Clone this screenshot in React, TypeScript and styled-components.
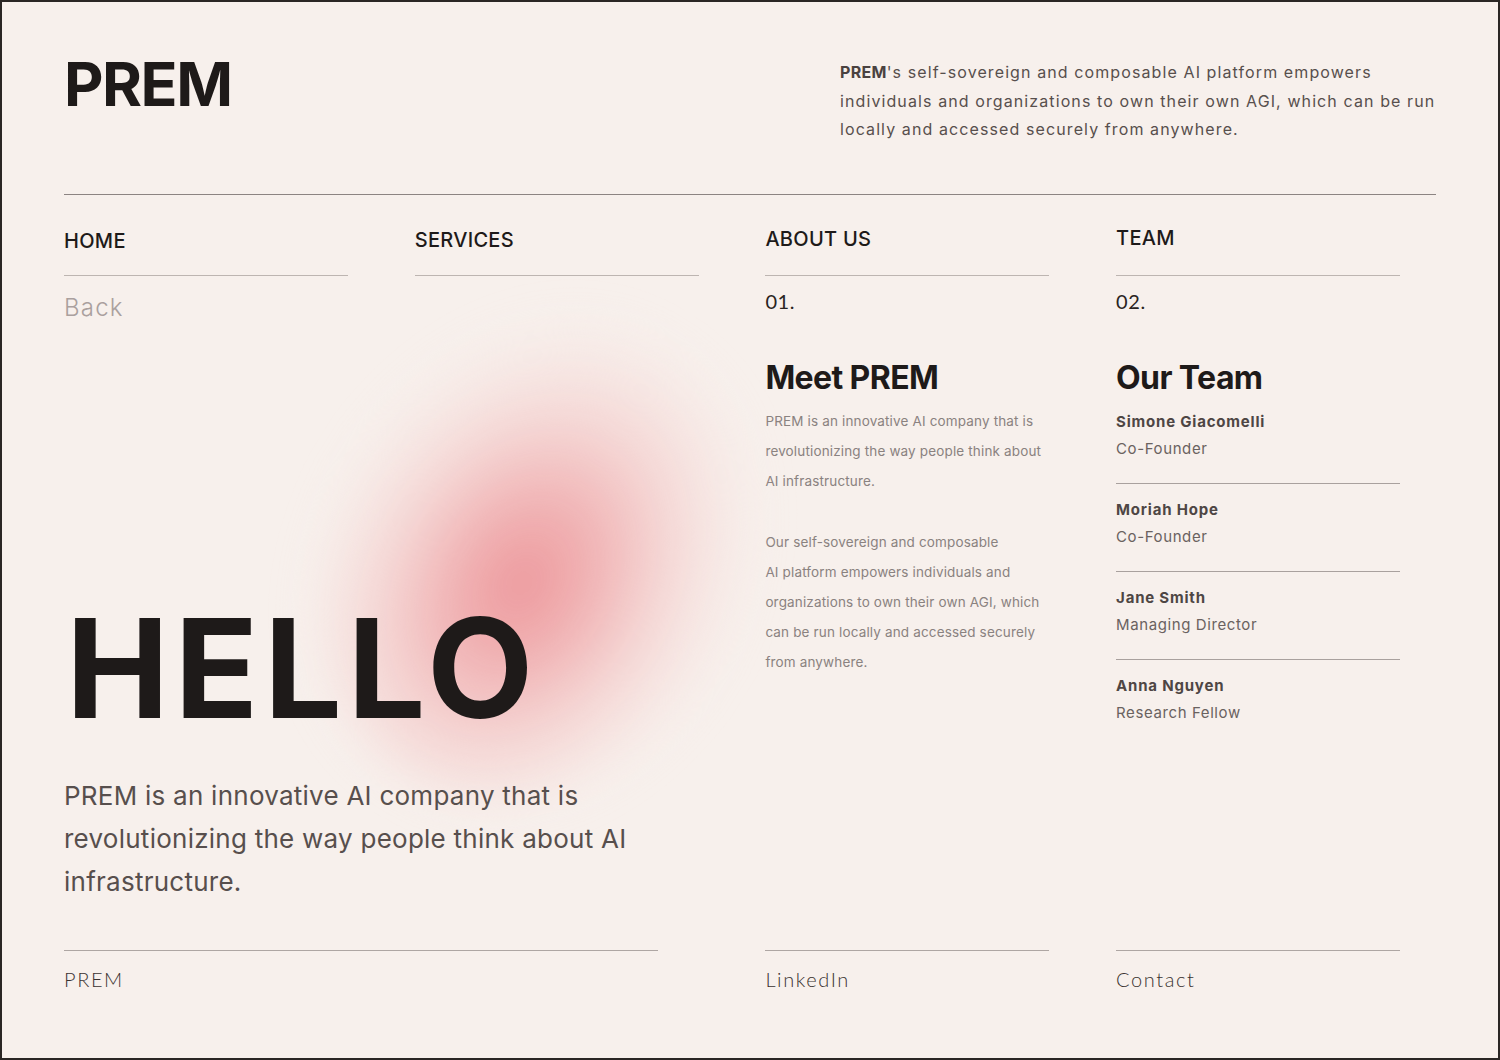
import styled, { createGlobalStyle } from 'styled-components';

const GlobalStyle = createGlobalStyle`
  html, body {
    margin: 0;
    padding: 0;
    background: #f7f0ec;
  }
  * {
    box-sizing: border-box;
  }
`;

const C = {
  bg: '#f7f0ec',
  ink: '#1e1a19',
  text: '#574f4d',
  soft: '#8a8280',
  faint: '#aaa09e',
  rule: '#8c8482',
  ruleLight: '#bdb5b1',
};

const SANS = `'Inter', 'Noto Sans', sans-serif`;
const LIGHT = `'Lato', 'Noto Sans', sans-serif`;

const Frame = styled.div`
  width: 1500px;
  height: 1060px;
  border: 2px solid #2a2624;
  background: ${C.bg};
  padding: 0 62px;
  display: flex;
  flex-direction: column;
  overflow: hidden;
  font-family: ${SANS};
`;

const Header = styled.header`
  height: 193px;
  display: flex;
  justify-content: space-between;
  align-items: flex-start;
  padding-top: 52px;
  border-bottom: 1px solid ${C.rule};
`;

const Logo = styled.div`
  font-size: 61px;
  font-weight: 700;
  line-height: 1;
  letter-spacing: -1.5px;
  color: ${C.ink};
`;

const Intro = styled.p`
  margin: 4px 0 0;
  width: 596px;
  font-size: 16px;
  line-height: 28.5px;
  letter-spacing: 1.1px;
  color: ${C.text};

  strong {
    font-weight: 700;
    color: #4a4240;
    letter-spacing: 0.3px;
  }
`;

const Grid = styled.div`
  display: grid;
  grid-template-columns: repeat(4, 284px);
  column-gap: 66.7px;
  align-content: start;
`;

const Body = styled(Grid)`
  flex: 1;
`;

const NavCell = styled.div<{ $lift?: number }>`
  padding-top: ${({ $lift }) => 33 - ($lift ?? 0)}px;
  padding-bottom: ${({ $lift }) => 23 + ($lift ?? 0)}px;
  border-bottom: 1.5px solid ${C.ruleLight};
  font-size: 20px;
  font-weight: 500;
  line-height: 24px;
  letter-spacing: 0.3px;
  color: ${C.ink};
`;

const Hero = styled.section`
  grid-column: 1 / span 2;
  position: relative;
  display: flex;
  flex-direction: column;
`;

const Back = styled.div`
  margin-top: 17px;
  font-size: 24px;
  font-weight: 300;
  line-height: 30px;
  letter-spacing: 1.2px;
  color: ${C.faint};
`;

const Blob = styled.div`
  position: absolute;
  left: 266px;
  top: 36px;
  width: 410px;
  height: 500px;
  border-radius: 50%;
  transform: rotate(32deg);
  background: radial-gradient(
    ellipse at 50% 55%,
    rgba(236, 146, 150, 0.95) 0%,
    rgba(239, 164, 167, 0.8) 22%,
    rgba(243, 194, 194, 0.55) 44%,
    rgba(246, 220, 218, 0.32) 62%,
    rgba(247, 240, 236, 0) 78%
  );
  filter: blur(22px);
  pointer-events: none;
`;

const Hello = styled.h1`
  position: relative;
  margin: 276px 0 0 2px;
  font-size: 138px;
  font-weight: 700;
  line-height: 1;
  letter-spacing: 5.5px;
  color: ${C.ink};
`;

const Lead = styled.p`
  position: relative;
  margin: 37px 0 0;
  width: 620px;
  font-size: 26px;
  line-height: 43px;
  letter-spacing: 0.25px;
  color: ${C.text};
`;

const Column = styled.section`
  display: flex;
  flex-direction: column;
`;

const Index = styled.div`
  margin-top: 13px;
  font-family: ${LIGHT};
  font-size: 20px;
  line-height: 24px;
  letter-spacing: 0.6px;
  color: #2a2422;
`;

const ColTitle = styled.h2`
  margin: 46px 0 0;
  font-size: 32px;
  font-weight: 700;
  line-height: 38px;
  letter-spacing: -0.6px;
  color: ${C.ink};
`;

const Copy = styled.div`
  margin-top: 9px;

  p {
    margin: 0 0 30px;
    font-size: 13.5px;
    line-height: 30.2px;
    letter-spacing: 0.15px;
    color: ${C.soft};
  }
`;

const Members = styled.div`
  margin-top: 11px;
`;

const Member = styled.div`
  padding: 12px 0 21px;
  border-bottom: 1.5px solid #a9a19e;

  &:first-child {
    padding-top: 0;
  }
  &:last-child {
    border-bottom: none;
  }
`;

const MemberName = styled.div`
  font-size: 15px;
  font-weight: 700;
  line-height: 27px;
  letter-spacing: 0.8px;
  color: #4e4644;
`;

const MemberRole = styled.div`
  font-size: 15px;
  line-height: 27px;
  letter-spacing: 0.6px;
  color: #6a6260;
`;

const Footer = styled(Grid)`
  padding-bottom: 67px;
`;

const FootCell = styled.div<{ $span?: number; $trim?: number }>`
  grid-column: span ${({ $span }) => $span ?? 1};
  margin-right: ${({ $trim }) => $trim ?? 0}px;
  padding-top: 16px;
  border-top: 1.5px solid #aea6a3;
  font-family: ${LIGHT};
  font-size: 20px;
  font-weight: 300;
  line-height: 24px;
  letter-spacing: 1.6px;
  color: #3a3230;
`;

const team = [
  { name: 'Simone Giacomelli', role: 'Co-Founder' },
  { name: 'Moriah Hope', role: 'Co-Founder' },
  { name: 'Jane Smith', role: 'Managing Director' },
  { name: 'Anna Nguyen', role: 'Research Fellow' },
];

export default function App() {
  return (
    <>
      <GlobalStyle />
      <Frame>
        <Header>
          <Logo>PREM</Logo>
          <Intro>
            <strong>PREM</strong>'s self-sovereign and composable AI platform empowers individuals and
            organizations to own their own AGI, which can be run locally and accessed securely from anywhere.
          </Intro>
        </Header>

        <Body>
          <NavCell $lift={-1}>HOME</NavCell>
          <NavCell>SERVICES</NavCell>
          <NavCell $lift={1}>ABOUT US</NavCell>
          <NavCell $lift={2}>TEAM</NavCell>

          <Hero>
            <Back>Back</Back>
            <Blob />
            <Hello>HELLO</Hello>
            <Lead>
              PREM is an innovative AI company that is
              <br />
              revolutionizing the way people think about AI infrastructure.
            </Lead>
          </Hero>

          <Column>
            <Index>01.</Index>
            <ColTitle>Meet PREM</ColTitle>
            <Copy>
              <p>PREM is an innovative AI company that is revolutionizing the way people think about AI infrastructure.</p>
              <p>
                Our self-sovereign and composable
                <br />
                AI platform empowers individuals and organizations to own their own AGI, which can be run locally
                and accessed securely from anywhere.
              </p>
            </Copy>
          </Column>

          <Column>
            <Index>02.</Index>
            <ColTitle>Our Team</ColTitle>
            <Members>
              {team.map((m) => (
                <Member key={m.name}>
                  <MemberName>{m.name}</MemberName>
                  <MemberRole>{m.role}</MemberRole>
                </Member>
              ))}
            </Members>
          </Column>
        </Body>

        <Footer>
          <FootCell $span={2} $trim={41}>PREM</FootCell>
          <FootCell>LinkedIn</FootCell>
          <FootCell>Contact</FootCell>
        </Footer>
      </Frame>
    </>
  );
}
